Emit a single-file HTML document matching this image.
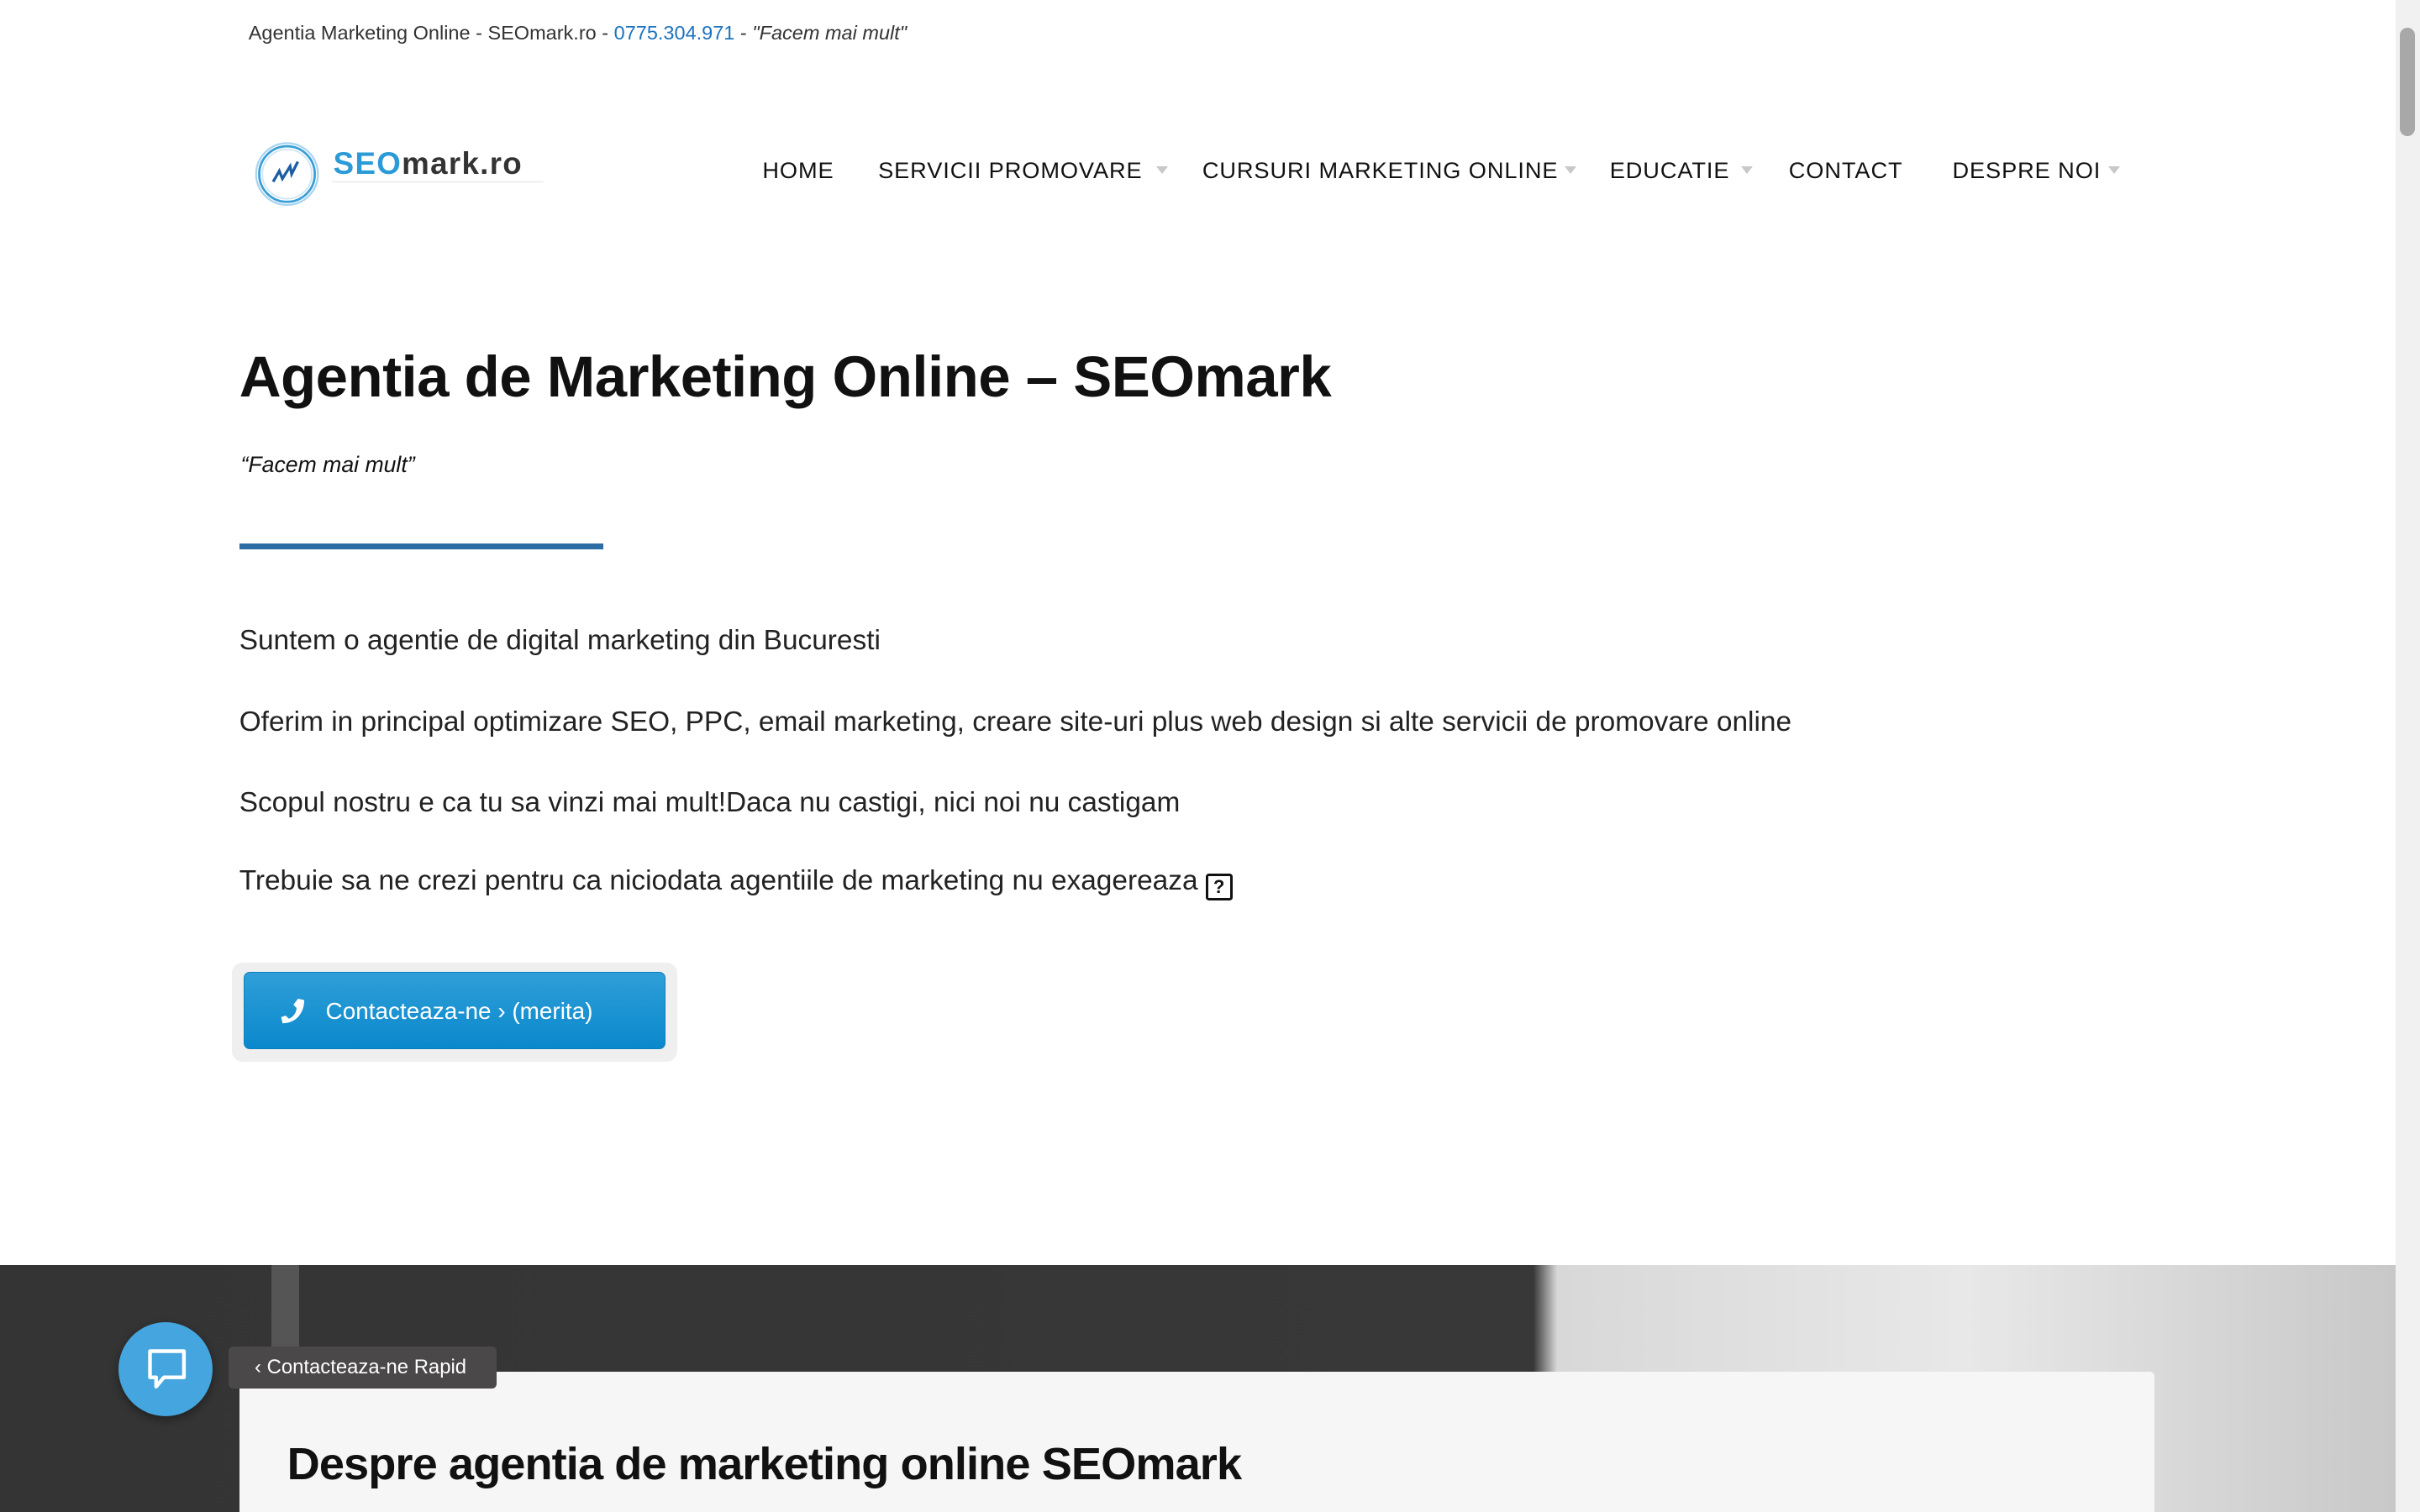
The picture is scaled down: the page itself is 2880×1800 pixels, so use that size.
<!DOCTYPE html>
<html><head><meta charset="utf-8"><style>
html,body{margin:0;padding:0;overflow:hidden}
body{width:1568px;height:980px;zoom:1.836735;position:relative;background:#fff;font-family:"Liberation Sans",sans-serif;color:#111}
.a{position:absolute;white-space:nowrap}
.nav{top:102px;font-size:14.8px;letter-spacing:0.5px;color:#111}
.arr{position:absolute;top:108px;width:0;height:0;border-left:4px solid transparent;border-right:4px solid transparent;border-top:5px solid #c8c8c8}
p.a{margin:0;font-size:18.2px;color:#222;font-weight:300}
</style></head><body>
<div class="a" style="left:161px;top:14px;font-size:12.8px;color:#333">Agentia Marketing Online - SEOmark.ro - <span style="color:#1e73be">0775.304.971</span> - <i>"Facem mai mult"</i></div>

<svg class="a" style="left:165px;top:90px" width="190" height="46" viewBox="0 0 190 46">
<circle cx="21" cy="23" r="20" fill="none" stroke="#a8d4ee" stroke-width="1.2"/>
<circle cx="21" cy="23" r="18" fill="none" stroke="#3a9fd8" stroke-width="1.5"/>
<circle cx="21" cy="23" r="16" fill="none" stroke="#cfe6f4" stroke-width="1"/>
<path d="M12 28 L16 21 L18 26 L23 18 L24 23 L28 15" fill="none" stroke="#1b5fa0" stroke-width="1.8"/>
<text x="51" y="23" font-family="Liberation Sans" font-weight="bold" font-size="20" fill="#2b9bd7" textLength="122">SEO<tspan fill="#333">mark.ro</tspan></text>
<line x1="50" y1="28" x2="187" y2="28" stroke="#eee" stroke-width="1"/>
</svg>

<div class="a nav" style="left:494px">HOME</div>
<div class="a nav" style="left:569px">SERVICII PROMOVARE</div><div class="arr" style="left:749px"></div>
<div class="a nav" style="left:779px">CURSURI MARKETING ONLINE</div><div class="arr" style="left:1014px"></div>
<div class="a nav" style="left:1043px">EDUCATIE</div><div class="arr" style="left:1128px"></div>
<div class="a nav" style="left:1159px">CONTACT</div>
<div class="a nav" style="left:1265px">DESPRE NOI</div><div class="arr" style="left:1366px"></div>

<div class="a" style="left:155px;top:222px;font-size:37.6px;font-weight:bold;color:#111;letter-spacing:-0.3px">Agentia de Marketing Online – SEOmark</div>
<div class="a" style="left:156px;top:293px;font-size:14.5px;font-style:italic;color:#111">“Facem mai mult”</div>
<div class="a" style="left:155px;top:352px;width:236px;height:4px;background:#2e6da4"></div>

<p class="a" style="left:155px;top:405px">Suntem o agentie de digital marketing din Bucuresti</p>
<p class="a" style="left:155px;top:458px">Oferim in principal optimizare SEO, PPC, email marketing, creare site-uri plus web design si alte servicii de promovare online</p>
<p class="a" style="left:155px;top:510px">Scopul nostru e ca tu sa vinzi mai mult!Daca nu castigi, nici noi nu castigam</p>
<p class="a" style="left:155px;top:561px">Trebuie sa ne crezi pentru ca niciodata agentiile de marketing nu exagereaza <span style="display:inline-block;width:14px;height:14px;border:2px solid #111;border-radius:2px;font-size:12px;font-weight:bold;line-height:14px;text-align:center;vertical-align:-2px;color:#111">?</span></p>

<div class="a" style="left:150px;top:624px;width:289px;height:64px;background:#efefef;border-radius:7px"></div>
<div class="a" style="left:158px;top:630px;width:273px;height:50px;background:linear-gradient(#2f9fd8,#0a88cc);border-radius:4px;border:1px solid #0a80c0;box-sizing:border-box"></div>
<svg class="a" style="left:179px;top:646px" width="20" height="20" viewBox="0 0 20 20"><path d="M14 1 L18 2 C18 10 13 17 4 17 L3 13 L6 12 L8 14 C11 13 13 10 13 7 L11 5 Z" fill="#fff"/></svg>
<div class="a" style="left:211px;top:647px;font-size:15.2px;color:#fff">Contacteaza-ne › (merita)</div>

<div class="a" style="left:0;top:820px;width:1552px;height:160px;background:linear-gradient(90deg,#343434 0%,#383838 64%,#d8d8d8 65%,#e8e8e8 82%,#c8c8c8 100%)"></div>
<div class="a" style="left:176px;top:820px;width:18px;height:70px;background:#555"></div>
<div class="a" style="left:155px;top:889px;width:1241px;height:91px;background:#f6f6f6;border-radius:3px 3px 0 0"></div>
<div class="a" style="left:186px;top:932px;font-size:29.5px;font-weight:bold;color:#111;letter-spacing:-0.5px">Despre agentia de marketing online SEOmark</div>

<div class="a" style="left:77px;top:857px;width:61px;height:61px;border-radius:50%;background:#45a5de;box-shadow:0 2px 6px rgba(0,0,0,.4)"></div>
<svg class="a" style="left:94px;top:873px" width="28" height="30" viewBox="0 0 28 30"><path d="M3 3 H25 V20 H12 L7 26 V20 H3 Z" fill="none" stroke="#fff" stroke-width="2.4" stroke-linejoin="round"/></svg>
<div class="a" style="left:148px;top:873px;width:174px;height:27px;background:#4a4848;border-radius:3px"></div>
<div class="a" style="left:165px;top:879px;font-size:13px;color:#fff">‹ Contacteaza-ne Rapid</div>

<div class="a" style="left:1552px;top:0;width:16px;height:980px;background:#f1f1f1"></div>
<div class="a" style="left:1555px;top:18px;width:10px;height:70px;background:#a8a8a8;border-radius:5px"></div>
</body></html>
